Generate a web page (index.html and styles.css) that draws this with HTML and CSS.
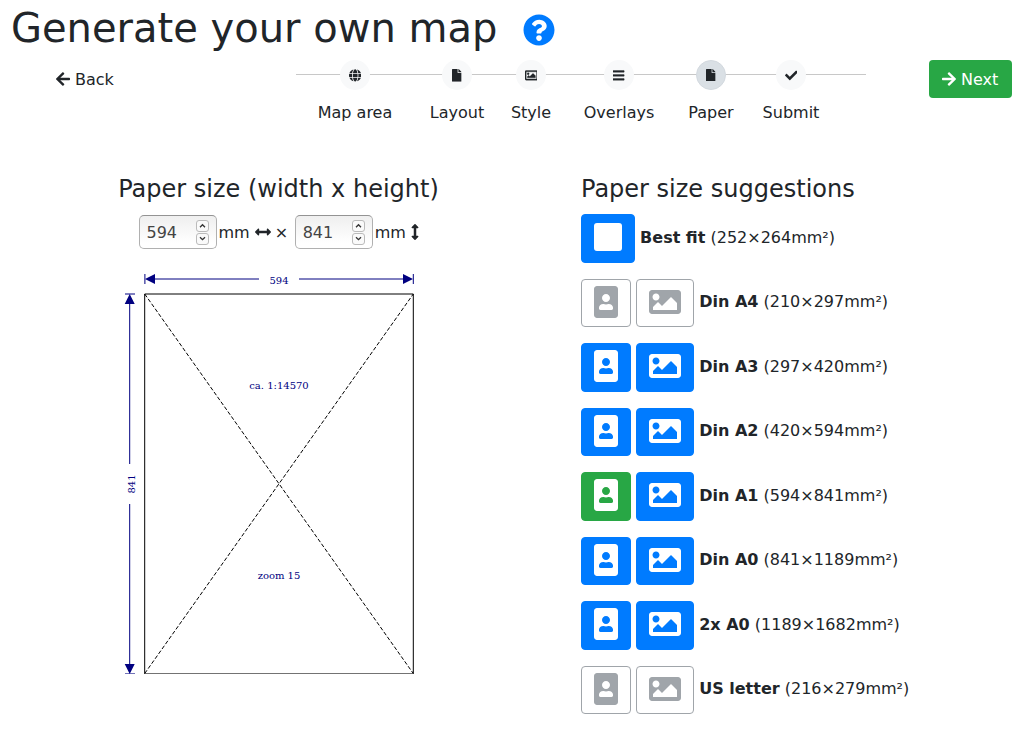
FILE: index.html
```
<!DOCTYPE html>
<html lang="en">
<head>
<meta charset="utf-8">
<title>Generate your own map</title>
<link rel="stylesheet" href="styles.css">
</head>
<body>
<svg class="defs" width="0" height="0">
  <symbol id="arrow" viewBox="0 0 448 512"><path d="M257.5 445.1l-22.2 22.2c-9.4 9.4-24.6 9.4-33.9 0L7 273c-9.4-9.4-9.4-24.6 0-33.9L201.4 44.7c9.4-9.4 24.6-9.4 33.9 0l22.2 22.2c9.5 9.5 9.3 25-.4 34.3L136.6 216H424c13.3 0 24 10.7 24 24v32c0 13.3-10.7 24-24 24H136.6l120.5 114.8c9.8 9.3 10 24.8.4 34.3z"/></symbol>
  <symbol id="file" viewBox="0 0 384 512"><path d="M224 136V0H24C10.7 0 0 10.7 0 24v464c0 13.3 10.7 24 24 24h336c13.3 0 24-10.7 24-24V160H248c-13.2 0-24-10.8-24-24zm160-14.1v6.1H256V0h6.1c6.4 0 12.5 2.5 17 7l97.9 98c4.5 4.5 7 10.6 7 16.9z"/></symbol>
  <symbol id="double" viewBox="0 0 512 512"><path d="M377.941 169.941V216H134.059v-46.059c0-21.382-25.851-32.09-40.971-16.971L7.029 239.029c-9.373 9.373-9.373 24.568 0 33.941l86.059 86.059c15.119 15.119 40.971 4.411 40.971-16.971V296h243.882v46.059c0 21.382 25.851 32.09 40.971 16.971l86.059-86.059c9.373-9.373 9.373-24.568 0-33.941l-86.059-86.059c-15.119-15.12-40.971-4.412-40.971 16.97z"/></symbol>
  <symbol id="portrait" viewBox="0 0 384 512"><path d="M336 0H48C21.5 0 0 21.5 0 48v416c0 26.5 21.5 48 48 48h288c26.5 0 48-21.5 48-48V48c0-26.5-21.5-48-48-48zM192 128c35.3 0 64 28.7 64 64s-28.7 64-64 64-64-28.7-64-64 28.7-64 64-64zm112 236.8c0 10.6-10 19.2-22.4 19.2H102.4C90 384 80 375.4 80 364.8v-19.2c0-31.8 30.1-57.6 67.2-57.6h5c12.3 5.1 25.7 8 39.8 8s27.6-2.9 39.8-8h5c37.1 0 67.2 25.8 67.2 57.6v19.2z"/></symbol>
  <symbol id="image" viewBox="0 0 512 512"><path d="M464 448H48c-26.51 0-48-21.49-48-48V112c0-26.51 21.49-48 48-48h416c26.51 0 48 21.49 48 48v288c0 26.51-21.49 48-48 48zM112 120c-30.928 0-56 25.072-56 56s25.072 56 56 56 56-25.072 56-56-25.072-56-56-56zM64 384h384V272l-87.515-87.515c-4.686-4.686-12.284-4.686-16.971 0L208 320l-55.515-55.515c-4.686-4.686-12.284-4.686-16.971 0L64 336v48z"/></symbol>
</svg>

<header class="title-row">
  <h1 class="title">Generate your own map</h1>
  <svg class="help" viewBox="0 0 512 512"><path d="M504 256c0 136.997-111.043 248-248 248S8 392.997 8 256C8 119.083 119.043 8 256 8s248 111.083 248 248zM262.655 90c-54.497 0-89.255 22.957-116.549 63.758-3.536 5.286-2.353 12.415 2.715 16.258l34.699 26.31c5.205 3.947 12.621 3.008 16.665-2.122 17.864-22.658 30.113-35.797 57.303-35.797 20.429 0 45.698 13.148 45.698 32.958 0 14.976-12.363 22.667-32.534 33.976C247.128 238.528 216 254.941 216 296v4c0 6.627 5.373 12 12 12h56c6.627 0 12-5.373 12-12v-1.333c0-28.462 83.186-29.647 83.186-106.667 0-58.002-60.165-102-116.531-102zM256 338c-25.365 0-46 20.635-46 46 0 25.364 20.635 46 46 46s46-20.636 46-46c0-25.365-20.635-46-46-46z"/></svg>
</header>

<nav class="wizard">
  <a class="back"><svg class="arrow"><use href="#arrow"/></svg>Back</a>
  <div class="steps">
    <div class="step"><span class="dot"><svg class="ic-globe" viewBox="0 0 496 512"><path d="M336.5 160C322 70.7 287.8 8 248 8s-74 62.7-88.5 152h177zM152 256c0 22.2 1.2 43.5 3.3 64h185.3c2.1-20.5 3.3-41.8 3.3-64s-1.2-43.5-3.3-64H155.3c-2.1 20.5-3.3 41.8-3.3 64zm324.7-96c-28.6-67.9-86.5-120.4-158-141.6 24.4 33.8 41.2 84.7 50 141.6h108zM177.2 18.4C105.8 39.6 47.8 92.1 19.3 160h108c8.7-56.9 25.5-107.8 49.9-141.6zM487.4 192H372.7c2.1 21 3.3 42.5 3.3 64s-1.2 43-3.3 64h114.6c5.5-20.5 8.6-41.8 8.6-64s-3.1-43.5-8.5-64zM120 256c0-21.5 1.2-43 3.3-64H8.6C3.2 212.5 0 233.8 0 256s3.2 43.5 8.6 64h114.6c-2-21-3.2-42.5-3.2-64zm39.5 96c14.5 89.3 48.7 152 88.5 152s74-62.7 88.5-152h-177zm159.3 141.6c71.4-21.2 129.4-73.7 158-141.6h-108c-8.8 56.9-25.6 107.8-50 141.6zM19.3 352c28.6 67.9 86.5 120.4 158 141.6-24.4-33.8-41.2-84.7-50-141.6h-108z"/></svg></span><span>Map area</span></div>
    <div class="step"><span class="dot"><svg class="ic-file"><use href="#file"/></svg></span><span>Layout</span></div>
    <div class="step"><span class="dot"><svg class="ic heavy" viewBox="0 0 512 512"><path d="M464 64H48C21.49 64 0 85.49 0 112v288c0 26.51 21.49 48 48 48h416c26.51 0 48-21.49 48-48V112c0-26.51-21.49-48-48-48zm-6 336H54a6 6 0 0 1-6-6V118a6 6 0 0 1 6-6h404a6 6 0 0 1 6 6v276a6 6 0 0 1-6 6zM128 152c-22.091 0-40 17.909-40 40s17.909 40 40 40 40-17.909 40-40-17.909-40-40-40zM96 352h320v-80l-87.515-87.515c-4.686-4.686-12.284-4.686-16.971 0L192 304l-39.515-39.515c-4.686-4.686-12.284-4.686-16.971 0L96 304v48z"/></svg></span><span>Style</span></div>
    <div class="step"><span class="dot"><svg class="ic-bars heavy" viewBox="0 0 448 512"><path d="M16 132h416c8.8 0 16-7.2 16-16V76c0-8.8-7.2-16-16-16H16C7.2 60 0 67.2 0 76v40c0 8.8 7.2 16 16 16zm0 160h416c8.8 0 16-7.2 16-16v-40c0-8.8-7.2-16-16-16H16c-8.8 0-16 7.2-16 16v40c0 8.8 7.2 16 16 16zm0 160h416c8.8 0 16-7.2 16-16v-40c0-8.8-7.2-16-16-16H16c-8.8 0-16 7.2-16 16v40c0 8.8 7.2 16 16 16z"/></svg></span><span>Overlays</span></div>
    <div class="step"><span class="dot current"><svg class="ic-file"><use href="#file"/></svg></span><span>Paper</span></div>
    <div class="step"><span class="dot"><svg class="ic" viewBox="0 0 512 512"><path d="M173.898 439.404l-166.4-166.4c-9.997-9.997-9.997-26.206 0-36.204l36.203-36.204c9.997-9.998 26.207-9.998 36.204 0L192 312.69 432.095 72.596c9.997-9.997 26.207-9.997 36.204 0l36.203 36.204c9.997 9.997 9.997 26.206 0 36.204l-294.4 294.401c-9.998 9.997-26.207 9.997-36.204-.001z"/></svg></span><span>Submit</span></div>
  </div>
  <a class="next"><svg class="arrow flip"><use href="#arrow"/></svg>Next</a>
</nav>

<main class="content">
  <section class="size">
    <h2 class="heading">Paper size (width x height)</h2>
    <div class="fields">
      <span class="num"><span>594</span><span class="spin"><svg viewBox="0 0 13 12"><path d="M3.5 7.5l3-3 3 3"/></svg><svg viewBox="0 0 13 12"><path d="M3.5 3.8l3 3 3-3"/></svg></span></span>
      <span class="unit">mm</span><svg class="dir"><use href="#double"/></svg><span class="times">×</span>
      <span class="num"><span>841</span><span class="spin"><svg viewBox="0 0 13 12"><path d="M3.5 7.5l3-3 3 3"/></svg><svg viewBox="0 0 13 12"><path d="M3.5 3.8l3 3 3-3"/></svg></span></span>
      <span class="unit">mm</span><svg class="dir vert"><use href="#double"/></svg>
    </div>
    <svg class="diagram" viewBox="120 270 300 410">
      <g class="outline">
        <path d="M144.700 673.500V294H413.300V673.500"/>
        <path class="base" d="M144.200 673.500H413.800"/>
        <path class="dash" d="M144.700 294L413.300 673.500"/>
        <path class="dash" d="M144.700 673.500L413.300 294"/>
      </g>
      <g class="dims">
        <path d="M155 279H259M299 279H403M144.900 274V284M413.300 274V284"/>
        <path d="M129.700 304V464M129.700 504V664M125 294H135"/>
        <path class="base" d="M125 673.500H135"/>
      </g>
      <g class="labels">
        <path d="M145 279l10-5v10zM413 279l-10-5v10zM129.700 294l-5 10h10zM129.700 674l-5-10h10z"/>
        <text x="279" y="284">594</text>
        <text x="279" y="389">ca. 1:14570</text>
        <text x="279" y="579">zoom 15</text>
        <text transform="translate(135 484) rotate(-90)">841</text>
      </g>
    </svg>
  </section>

  <section class="suggest">
    <h2 class="heading">Paper size suggestions</h2>
    <div class="row"><span class="btn"><svg class="square" viewBox="0 0 448 512"><rect y="32" width="448" height="448" rx="48"/></svg></span><span class="label"><b>Best fit</b> (252×264mm²)</span></div>
    <div class="row"><span class="btn off"><svg class="por"><use href="#portrait"/></svg></span><span class="btn off"><svg class="land"><use href="#image"/></svg></span><span class="label"><b>Din A4</b> (210×297mm²)</span></div>
    <div class="row"><span class="btn"><svg class="por"><use href="#portrait"/></svg></span><span class="btn"><svg class="land"><use href="#image"/></svg></span><span class="label"><b>Din A3</b> (297×420mm²)</span></div>
    <div class="row"><span class="btn"><svg class="por"><use href="#portrait"/></svg></span><span class="btn"><svg class="land"><use href="#image"/></svg></span><span class="label"><b>Din A2</b> (420×594mm²)</span></div>
    <div class="row"><span class="btn picked"><svg class="por"><use href="#portrait"/></svg></span><span class="btn"><svg class="land"><use href="#image"/></svg></span><span class="label"><b>Din A1</b> (594×841mm²)</span></div>
    <div class="row"><span class="btn"><svg class="por"><use href="#portrait"/></svg></span><span class="btn"><svg class="land"><use href="#image"/></svg></span><span class="label"><b>Din A0</b> (841×1189mm²)</span></div>
    <div class="row"><span class="btn"><svg class="por"><use href="#portrait"/></svg></span><span class="btn"><svg class="land"><use href="#image"/></svg></span><span class="label"><b>2x A0</b> (1189×1682mm²)</span></div>
    <div class="row"><span class="btn off"><svg class="por"><use href="#portrait"/></svg></span><span class="btn off"><svg class="land"><use href="#image"/></svg></span><span class="label"><b>US letter</b> (216×279mm²)</span></div>
  </section>
</main>
</body>
</html>
```
FILE: styles.css
```
* { box-sizing: border-box; }
body {
  margin: 0;
  height: 730px;
  overflow: hidden;
  background: #fff;
  color: #212529;
  font: 16px/24px "DejaVu Sans", sans-serif;
}
svg { display: block; flex: none; fill: currentColor; }
.defs { position: absolute; }

.title-row { display: flex; align-items: center; height: 60px; padding: 0 12px 4px 11px; }
.title { margin: 0; font-size: 40px; font-weight: 400; line-height: 48px; white-space: nowrap; }
.help { width: 32px; height: 32px; margin: 4px 0 0 26px; color: #007bff; }

.wizard { display: flex; align-items: flex-start; height: 116px; padding: 0 12px 0 56px; }
.back, .next { display: flex; align-items: center; gap: 5px; height: 38px; padding-top: 2px; white-space: nowrap; }
.back { width: 240px; }
.next { width: 83px; padding-left: 13px; margin-left: auto; border-radius: 4px; background: #28a745; color: #fff; }
.arrow { width: 14px; height: 16px; margin-bottom: 2px; }
.flip { transform: scaleX(-1); }
.steps {
  display: grid;
  grid-template-columns: 102px 102px 46px 130px 54px 106px;
  width: 570px;
  padding-left: 8px;
  background: linear-gradient(#c8c8c8, #c8c8c8) 0 14px / 100% 1px no-repeat;
}
.step { display: flex; flex-direction: column; align-items: center; gap: 11px; white-space: nowrap; }
.dot { display: flex; align-items: center; justify-content: center; width: 30px; height: 30px; padding-top: 1px; border-radius: 50%; background: #f8f9fa; }
.current { background: #dae0e5; border: 1px solid #d3d9df; padding-top: 0; }
.ic { width: 12.8px; height: 12.8px; }
.ic-globe { width: 12.4px; height: 12.8px; }
.ic-file { width: 9.6px; height: 12.8px; }
.ic-bars { width: 11.2px; height: 12.8px; }
.heavy { stroke: currentColor; stroke-width: 14; }

.content { display: flex; }
.heading { margin: 0; padding-top: 1px; font-size: 24px; font-weight: 400; line-height: 29px; white-space: nowrap; }
.size { display: flex; flex-direction: column; align-items: center; width: 557px; margin-top: -2px; }
.fields { display: flex; align-items: center; width: 280px; height: 34px; margin-top: 11px; }
.num {
  display: flex; flex: none; align-items: center; justify-content: space-between;
  width: 78px; height: 34px; padding: 0 7px;
  border: 1px solid #b0b0b0; border-top-color: #939393; border-radius: 5px;
  background: linear-gradient(#efefef, #fff 85%);
  color: #444;
}
.num > span:first-child, .unit, .times { padding-top: 2px; }
.spin { display: flex; flex-direction: column; gap: 1px; }
.spin svg {
  width: 13px; height: 12px;
  border: 1px solid #bbb; border-radius: 3px;
  background: #fafafa; fill: none; stroke: #333; stroke-width: 1.6;
}
.unit { margin-left: 2px; }
.dir { width: 16px; height: 16px; margin-left: 5px; }
.vert { transform: rotate(90deg); margin-left: 1px; }
.times { flex: none; width: 18px; margin: 0 2px 0 4px; }
.diagram { width: 300px; height: 410px; margin: 21px 17px 0 0; }
.outline { fill: none; stroke: #000; }
.dash { stroke-dasharray: 4 2; }
.base { stroke-opacity: .55; }
.dims { fill: none; stroke: #000080; }
.labels { fill: #000080; font: 10px "DejaVu Serif", serif; text-anchor: middle; }

.suggest { margin: -2px 0 0 24px; }
.suggest .heading { margin-bottom: 10px; }
.row { display: flex; gap: 5.09px; height: 48.5px; margin-bottom: 16px; }
.btn { padding: 6px 12px; height: 48.5px; border: 1px solid #007bff; border-radius: 4px; background: #007bff; color: #fff; }
.picked { background: #28a745; border-color: #28a745; }
.off { background: #fff; border-color: #a0a5aa; color: #a0a5aa; }
.square { width: 28px; height: 32px; }
.por { width: 24px; height: 32px; }
.land { width: 32px; height: 32px; }
.label { padding-top: 11.5px; white-space: nowrap; }
```
